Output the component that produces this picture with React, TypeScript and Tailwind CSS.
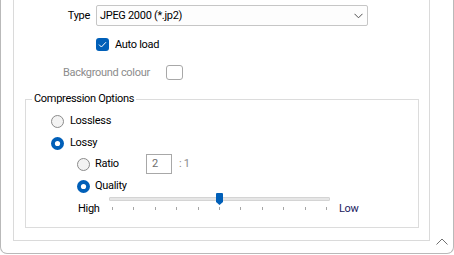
import React from "react";

const font = { fontFamily: 'Roboto, "Noto Sans", sans-serif', letterSpacing: "-0.3px" };

function Radio({ checked }: { checked?: boolean }) {
  return checked ? (
    <svg width="13" height="13" viewBox="0 0 13 13" className="shrink-0">
      <circle cx="6.5" cy="6.5" r="6.5" fill="#005fb8" />
      <circle cx="6.5" cy="6.5" r="2.6" fill="#ffffff" />
    </svg>
  ) : (
    <svg width="13" height="13" viewBox="0 0 13 13" className="shrink-0">
      <circle cx="6.5" cy="6.5" r="6" fill="#f3f3f3" stroke="#8a8a8a" strokeWidth="1" />
    </svg>
  );
}

export default function App() {
  const ticks = Array.from({ length: 11 });
  return (
    <div className="w-[454px] h-[255px] bg-white overflow-hidden text-[11px] text-black leading-[16px] whitespace-nowrap" style={font}>
      <div className="w-[454px] h-[254px] border-l border-r border-b border-[#b9b9b9] rounded-b-[7px] flex">
        <div className="ml-[12px] w-[417px] h-[241px] border-l border-r border-b border-[#dadada] flex flex-col">
          {/* Type row */}
          <div className="mt-[5px] flex items-center h-[21px]">
            <div className="w-[76px] text-right">Type</div>
            <div className="ml-[6px] w-[272px] h-[21px] border border-[#c6c6c6] rounded-[2px] bg-[#fdfdfd] flex items-center justify-between pl-[3px] pr-[4px]">
              <span>JPEG 2000 (*.jp2)</span>
              <svg width="9" height="6" viewBox="0 0 9 6">
                <path d="M0.5 0.8 L4.5 4.8 L8.5 0.8" fill="none" stroke="#505050" strokeWidth="1" />
              </svg>
            </div>
          </div>
          {/* Auto load */}
          <div className="mt-[9px] h-[19px] flex items-center">
            <div className="ml-[82px] w-[13px] h-[13px] rounded-[3px] bg-[#005fb8] flex items-center justify-center">
              <svg width="9" height="7" viewBox="0 0 9 7">
                <path d="M1 3.6 L3.4 6 L8 1.2" fill="none" stroke="#ffffff" strokeWidth="1" />
              </svg>
            </div>
            <span className="ml-[6px]">Auto load</span>
          </div>
          {/* Background colour */}
          <div className="mt-[9px] h-[19px] flex items-center">
            <span className="ml-[49px] w-[103px] text-[#8c8c8c]">Background colour</span>
            <div className="w-[17px] h-[15px] border border-[#a8a8a8] rounded-[3px] bg-white" />
          </div>
          {/* Group box */}
          <fieldset className="mt-[9px] ml-[11px] w-[394px] h-[137px] border border-[#dcdcdc] flex flex-col">
            <legend className="ml-[6px] px-[2px] leading-[16px]">Compression Options</legend>
            <div className="mt-[4px] h-[20px] flex items-center pl-[25px]">
              <Radio />
              <span className="ml-[6px]">Lossless</span>
            </div>
            <div className="mt-[2px] h-[20px] flex items-center pl-[25px]">
              <Radio checked />
              <span className="ml-[6px]">Lossy</span>
            </div>
            <div className="mt-[1px] h-[20px] flex items-center pl-[51px]">
              <Radio />
              <span className="ml-[5px] w-[51px]">Ratio</span>
              <div className="w-[26px] h-[20px] border border-[#a8a8a8] flex items-center pl-[5px] text-[#6d6d6d]">2</div>
              <span className="ml-[7px] text-[#8c8c8c]">: 1</span>
            </div>
            <div className="mt-[2px] h-[20px] flex items-center pl-[51px]">
              <Radio checked />
              <span className="ml-[5px]">Quality</span>
            </div>
            <div className="flex items-start pl-[52px]">
              <span className="mt-[5px] w-[31px]">High</span>
              <div className="mt-[1px] w-[221px] relative">
                <div className="h-[4px] bg-[#e6e6e6] border border-[#d4d4d4] rounded-[1px]" />
                <svg className="absolute left-[107px] top-[-4px]" width="7" height="12" viewBox="0 0 7 12">
                  <path d="M0 1 Q0 0 1 0 L6 0 Q7 0 7 1 L7 9 L3.5 12 L0 9 Z" fill="#005fb8" />
                </svg>
                <div className="mt-[6px] px-[3px] flex justify-between">
                  {ticks.map((_, i) => (
                    <div key={i} className="w-[1px] h-[3px] bg-[#a6a6a6]" />
                  ))}
                </div>
              </div>
              <span className="mt-[5px] ml-[9px] text-[#1a1a5e]">Low</span>
            </div>
          </fieldset>
        </div>
        <div className="flex-1 flex items-end justify-center pb-[8px]">
          <svg width="12" height="7" viewBox="0 0 12 7">
            <path d="M0.5 6.5 L6 1 L11.5 6.5" fill="none" stroke="#707070" strokeWidth="1" />
          </svg>
        </div>
      </div>
    </div>
  );
}
